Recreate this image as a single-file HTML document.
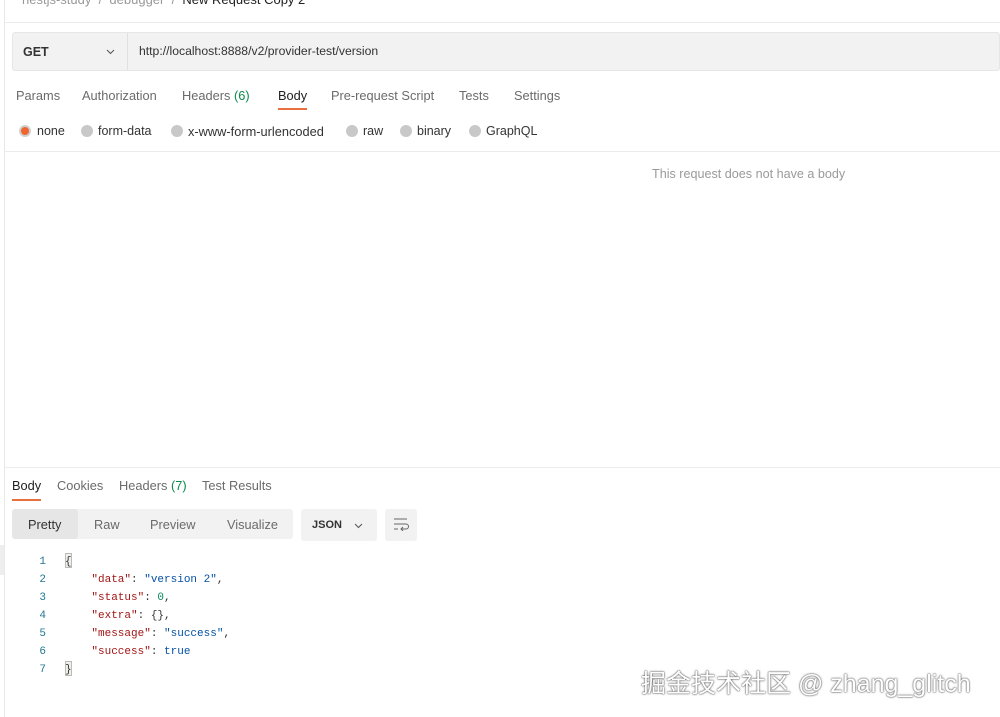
<!DOCTYPE html>
<html><head><style>
*{margin:0;padding:0;box-sizing:border-box}
body{width:1000px;height:717px;overflow:hidden;background:#fff;font-family:"Liberation Sans",sans-serif;font-size:12.5px;color:#212121;position:relative}
.a{position:absolute;white-space:nowrap}
.g{color:#6b6b6b}
.grn{color:#0a8a4a}
.radio{position:absolute;width:12px;height:12px;border-radius:50%;background:#c8c8c8;top:125px}
.mono{font-family:"Liberation Mono",monospace;font-size:11px}
.k{color:#a31515}.s{color:#0451a5}.n{color:#098658}.b{color:#0451a5}
</style></head><body>
<div class="a" style="left:4px;top:0;width:1px;height:717px;background:#e8e8e8"></div>
<div class="a g" style="left:22px;top:-8px;font-size:13px;color:#999">nestjs-study &nbsp;/&nbsp; debugger &nbsp;/&nbsp; <span style="color:#212121">New Request Copy 2</span></div>
<div class="a" style="left:4px;top:22px;width:996px;height:1px;background:#ececec"></div>
<div class="a" style="left:12px;top:32px;width:988px;height:39px;background:#f2f2f2;border:1px solid #e6e6e6;border-radius:3px"></div>
<div class="a" style="left:127px;top:33px;width:1px;height:37px;background:#e0e0e0"></div>
<div class="a" style="left:23px;top:45px;font-weight:bold;font-size:12.5px;color:#333">GET</div>
<svg class="a" style="left:106px;top:49px" width="9" height="6"><path d="M1 1l3.5 3.5L8 1" stroke="#555" fill="none"/></svg>
<div class="a" style="left:139px;top:44px;color:#333;font-size:12.2px">http://localhost:8888/v2/provider-test/version</div>
<div class="a g" style="left:16px;top:88px;font-size:12.8px">Params</div>
<div class="a g" style="left:82px;top:88px;font-size:12.8px">Authorization</div>
<div class="a g" style="left:182px;top:88px;font-size:12.8px">Headers <span class="grn">(6)</span></div>
<div class="a" style="left:278px;top:88px;font-size:12.8px">Body</div>
<div class="a" style="left:278px;top:108px;width:29px;height:2px;background:#e8703f"></div>
<div class="a g" style="left:331px;top:88px;font-size:12.8px">Pre-request Script</div>
<div class="a g" style="left:459px;top:88px;font-size:12.8px">Tests</div>
<div class="a g" style="left:514px;top:88px;font-size:12.8px">Settings</div>
<div class="radio" style="left:19px;background:#d0d0d0"><div style="position:absolute;left:2px;top:2px;width:8px;height:8px;border-radius:50%;background:#ef6530"></div></div>
<div class="a" style="left:37px;top:124px;color:#333">none</div>
<div class="radio" style="left:81px"></div><div class="a" style="left:98px;top:124px;color:#333">form-data</div>
<div class="radio" style="left:171px"></div><div class="a" style="left:188px;top:124px;color:#333;font-size:12.8px">x-www-form-urlencoded</div>
<div class="radio" style="left:346px"></div><div class="a" style="left:363px;top:124px;color:#333">raw</div>
<div class="radio" style="left:400px"></div><div class="a" style="left:417px;top:124px;color:#333">binary</div>
<div class="radio" style="left:469px"></div><div class="a" style="left:486px;top:124px;color:#333">GraphQL</div>
<div class="a" style="left:4px;top:151px;width:996px;height:1px;background:#ececec"></div>
<div class="a" style="left:652px;top:167px;color:#9a9a9a;font-size:12.6px">This request does not have a body</div>
<div class="a" style="left:4px;top:467px;width:996px;height:1px;background:#ececec"></div>
<div class="a" style="left:12px;top:478px;font-size:12.8px">Body</div>
<div class="a" style="left:12px;top:499px;width:29px;height:2px;background:#e8703f"></div>
<div class="a g" style="left:57px;top:478px;font-size:12.8px">Cookies</div>
<div class="a g" style="left:119px;top:478px;font-size:12.8px">Headers <span class="grn">(7)</span></div>
<div class="a g" style="left:202px;top:478px;font-size:12.8px">Test Results</div>
<div class="a" style="left:12px;top:509px;width:281px;height:30px;background:#f2f2f2;border-radius:3px"></div>
<div class="a" style="left:12px;top:509px;width:66px;height:30px;background:#e6e6e6;border-radius:3px"></div>
<div class="a" style="left:28px;top:517px;color:#333;font-size:12.8px">Pretty</div>
<div class="a g" style="left:94px;top:517px;font-size:12.8px">Raw</div>
<div class="a g" style="left:150px;top:517px;font-size:12.8px">Preview</div>
<div class="a g" style="left:227px;top:517px;font-size:12.8px">Visualize</div>
<div class="a" style="left:301px;top:509px;width:76px;height:32px;background:#f2f2f2;border-radius:3px"></div>
<div class="a" style="left:312px;top:519px;font-weight:bold;font-size:11px;color:#333">JSON</div>
<svg class="a" style="left:354px;top:523px" width="9" height="6"><path d="M1 1l3.5 3.5L8 1" stroke="#555" fill="none"/></svg>
<div class="a" style="left:385px;top:509px;width:32px;height:32px;background:#f2f2f2;border-radius:3px"></div>
<svg class="a" style="left:393px;top:517px" width="16" height="14"><path d="M1 2h13M1 7h12a2.5 2.5 0 0 1 0 5H8M10 10l-2 2 2 2M1 12h4" stroke="#666" fill="none"/></svg>
<div class="a" style="left:0;top:545px;width:4px;height:30px;background:#eee"></div>
<div class="mono a" style="left:38px;top:553px;color:#237893;line-height:18px;text-align:right;width:8px">1<br>2<br>3<br>4<br>5<br>6<br>7</div>
<div class="a" style="left:65px;top:553px;width:7px;height:15px;border:1px solid #bbb;background:#f0f0e8"></div>
<div class="a" style="left:65px;top:661px;width:7px;height:15px;border:1px solid #bbb;background:#f0f0e8"></div>
<div class="mono a" style="left:65px;top:553px;line-height:18px;color:#333">{<br>&nbsp;&nbsp;&nbsp;&nbsp;<span class="k">"data"</span>: <span class="s">"version 2"</span>,<br>&nbsp;&nbsp;&nbsp;&nbsp;<span class="k">"status"</span>: <span class="n">0</span>,<br>&nbsp;&nbsp;&nbsp;&nbsp;<span class="k">"extra"</span>: {},<br>&nbsp;&nbsp;&nbsp;&nbsp;<span class="k">"message"</span>: <span class="s">"success"</span>,<br>&nbsp;&nbsp;&nbsp;&nbsp;<span class="k">"success"</span>: <span class="b">true</span><br>}</div>
<div class="a" style="left:641px;top:664px;font-size:25px;color:#fff;text-shadow:0 0 2px #555,0 0 1px #333;font-family:'Liberation Sans','Noto Sans CJK SC',sans-serif">掘金技术社区 @ zhang_glitch</div>
</body></html>
